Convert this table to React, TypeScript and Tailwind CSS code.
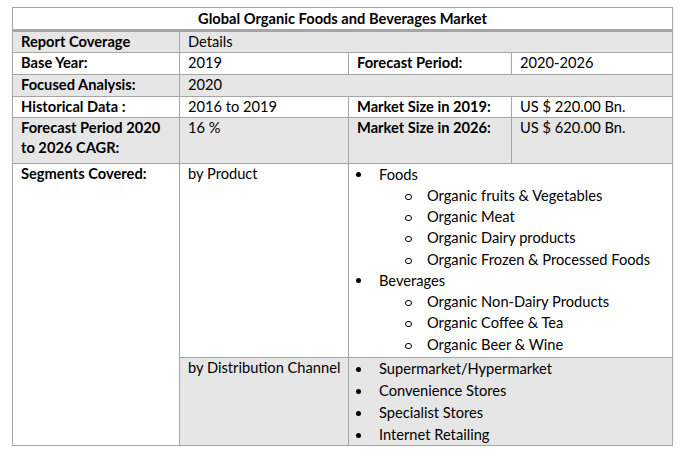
const font = { fontFamily: 'Lato, "Open Sans", sans-serif' };

const rows = [
  { label: 'Report Coverage', value: 'Details', span: true, shade: true, h: 'h-[21px]' },
  { label: 'Base Year:', value: '2019', k: 'Forecast Period:', v: '2020-2026', shade: false, h: 'h-[22px]' },
  { label: 'Focused Analysis:', value: '2020', span: true, shade: true, h: 'h-[22px]' },
  { label: 'Historical Data :', value: '2016 to 2019', k: 'Market Size in 2019:', v: 'US $ 220.00 Bn.', shade: false, h: 'h-[21px]' },
  { label: 'Forecast Period 2020 to 2026 CAGR:', value: '16 %', k: 'Market Size in 2026:', v: 'US $ 620.00 Bn.', shade: true, h: 'h-[46px]' },
];

const products = [
  { name: 'Foods', subs: ['Organic fruits & Vegetables', 'Organic Meat', 'Organic Dairy products', 'Organic Frozen & Processed Foods'] },
  { name: 'Beverages', subs: ['Organic Non-Dairy Products', 'Organic Coffee & Tea', 'Organic Beer & Wine'] },
];

const channels = ['Supermarket/Hypermarket', 'Convenience Stores', 'Specialist Stores', 'Internet Retailing'];

function Bullet({ children, lh }: { children: string; lh: string }) {
  return (
    <div className={`flex items-center ${lh}`}>
      <span className="flex w-[30px] pl-[7px]">
        <span className="h-[5px] w-[5px] rounded-full bg-black" />
      </span>
      <span>{children}</span>
    </div>
  );
}

function SubBullet({ children }: { children: string }) {
  return (
    <div className="flex h-[21.25px] items-center pl-[56px]">
      <span className="flex w-[22px] pt-[2px]">
        <span className="h-[6px] w-[7px] rounded-full border border-black" />
      </span>
      <span>{children}</span>
    </div>
  );
}

export default function App() {
  const cell = 'border-r border-b border-[#a5a5a5] px-2 leading-[20px]';
  return (
    <div className="h-[458px] w-[694px] bg-white pl-[12px] pt-[7px] text-[14.67px] text-black" style={font}>
      <div className="grid w-[661px] grid-cols-[167px_169px_163px_161px] border-t border-l border-[#a5a5a5]">
        <div className="col-span-4 flex h-[24px] items-center justify-center border-r border-b-[3px] border-[#a5a5a5] font-bold">
          Global Organic Foods and Beverages Market
        </div>

        {rows.map((r) => {
          const bg = r.shade ? 'bg-[#e7e6e6]' : 'bg-white';
          return (
            <div key={r.label} className="contents">
              <div className={`${cell} ${bg} ${r.h} font-bold`}>{r.label}</div>
              {r.span ? (
                <div className={`${cell} ${bg} ${r.h} col-span-3`}>{r.value}</div>
              ) : (
                <>
                  <div className={`${cell} ${bg} ${r.h}`}>{r.value}</div>
                  <div className={`${cell} ${bg} ${r.h} font-bold`}>{r.k}</div>
                  <div className={`${cell} ${bg} ${r.h}`}>{r.v}</div>
                </>
              )}
            </div>
          );
        })}

        <div className={`${cell} row-span-2 bg-white font-bold`}>Segments Covered:</div>
        <div className={`${cell} h-[194px] bg-white`}>by Product</div>
        <div className="col-span-2 h-[194px] border-r border-b border-[#a5a5a5] bg-white">
          {products.map((p) => (
            <div key={p.name}>
              <Bullet lh="h-[21.25px]">{p.name}</Bullet>
              {p.subs.map((s) => (
                <SubBullet key={s}>{s}</SubBullet>
              ))}
            </div>
          ))}
        </div>

        <div className="h-[88px] overflow-hidden whitespace-nowrap border-r border-b border-[#a5a5a5] bg-[#e7e6e6] pl-2 leading-[20px]">
          by Distribution Channel
        </div>
        <div className="col-span-2 h-[88px] border-r border-b border-[#a5a5a5] bg-[#e7e6e6]">
          {channels.map((c) => (
            <Bullet key={c} lh="h-[22px]">
              {c}
            </Bullet>
          ))}
        </div>
      </div>
    </div>
  );
}
